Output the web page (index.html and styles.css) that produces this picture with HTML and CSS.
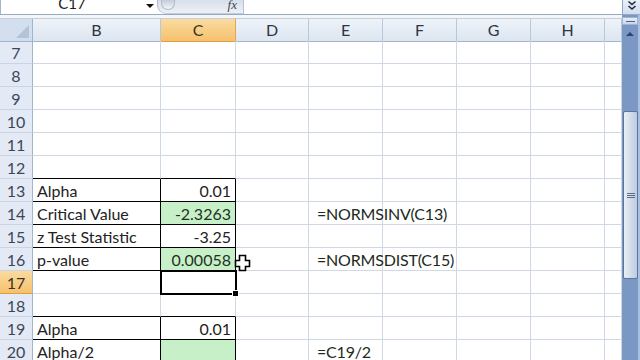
FILE: index.html
```html
<!DOCTYPE html>
<html lang="en">
<head>
    <meta charset="UTF-8">
    <title>Sheet1 - NORMSDIST</title>
    <link rel="stylesheet" href="styles.css">
</head>
<body>
    <div class="app">
        <div class="formula-bar">
            <div class="name-box">C17</div>
            <div class="name-drop"><span class="tri"></span></div>
            <div class="fx-box">
                <span class="knob"></span>
                <span class="fx">fx</span>
            </div>
            <div class="formula-input"></div>
            <div class="expand-btn">
                <svg width="12" height="12" viewBox="0 0 12 12">
                    <path d="M2.5 1.5 L6 4.5 L9.5 1.5 M2.5 6 L6 9 L9.5 6" fill="none" stroke="#1d2b40" stroke-width="1.6"/>
                </svg>
            </div>
        </div>

        <div class="main">
            <div class="sheet">
                <div class="row head">
                    <div class="corner"><span class="corner-tri"></span></div>
                    <div class="ch">B</div>
                    <div class="ch active">C</div>
                    <div class="ch">D</div>
                    <div class="ch">E</div>
                    <div class="ch">F</div>
                    <div class="ch">G</div>
                    <div class="ch">H</div>
                    <div class="ch"></div>
                </div>

                <div class="row">
                    <div class="rh">7</div>
                    <div class="cell"></div><div class="cell"></div><div class="cell"></div><div class="cell"></div>
                    <div class="cell"></div><div class="cell"></div><div class="cell"></div><div class="cell"></div>
                </div>
                <div class="row">
                    <div class="rh">8</div>
                    <div class="cell"></div><div class="cell"></div><div class="cell"></div><div class="cell"></div>
                    <div class="cell"></div><div class="cell"></div><div class="cell"></div><div class="cell"></div>
                </div>
                <div class="row">
                    <div class="rh">9</div>
                    <div class="cell"></div><div class="cell"></div><div class="cell"></div><div class="cell"></div>
                    <div class="cell"></div><div class="cell"></div><div class="cell"></div><div class="cell"></div>
                </div>
                <div class="row">
                    <div class="rh">10</div>
                    <div class="cell"></div><div class="cell"></div><div class="cell"></div><div class="cell"></div>
                    <div class="cell"></div><div class="cell"></div><div class="cell"></div><div class="cell"></div>
                </div>
                <div class="row">
                    <div class="rh">11</div>
                    <div class="cell"></div><div class="cell"></div><div class="cell"></div><div class="cell"></div>
                    <div class="cell"></div><div class="cell"></div><div class="cell"></div><div class="cell"></div>
                </div>
                <div class="row">
                    <div class="rh">12</div>
                    <div class="cell bb"></div><div class="cell bb"></div><div class="cell"></div><div class="cell"></div>
                    <div class="cell"></div><div class="cell"></div><div class="cell"></div><div class="cell"></div>
                </div>
                <div class="row">
                    <div class="rh">13</div>
                    <div class="cell bb br">Alpha</div><div class="cell bb br num">0.01</div><div class="cell"></div><div class="cell"></div>
                    <div class="cell"></div><div class="cell"></div><div class="cell"></div><div class="cell"></div>
                </div>
                <div class="row">
                    <div class="rh">14</div>
                    <div class="cell bb br">Critical Value</div><div class="cell bb br num good">-2.3263</div><div class="cell"></div><div class="cell formula">=NORMSINV(C13)</div>
                    <div class="cell"></div><div class="cell"></div><div class="cell"></div><div class="cell"></div>
                </div>
                <div class="row">
                    <div class="rh">15</div>
                    <div class="cell bb br">z Test Statistic</div><div class="cell bb br num">-3.25</div><div class="cell"></div><div class="cell"></div>
                    <div class="cell"></div><div class="cell"></div><div class="cell"></div><div class="cell"></div>
                </div>
                <div class="row">
                    <div class="rh">16</div>
                    <div class="cell bb br">p-value</div>
                    <div class="cell bb br num good cursor-host">0.00058
                        <svg class="cursor" width="17" height="18" viewBox="0 0 17 18">
                            <path d="M5.5 1.5 H11.5 V6.5 H15.5 V12.5 H11.5 V16.5 H5.5 V12.5 H1.5 V6.5 H5.5 Z" fill="#fff" stroke="#000" stroke-width="1.6" stroke-linejoin="miter"/>
                        </svg>
                    </div>
                    <div class="cell"></div><div class="cell formula">=NORMSDIST(C15)</div>
                    <div class="cell"></div><div class="cell"></div><div class="cell"></div><div class="cell"></div>
                </div>
                <div class="row">
                    <div class="rh active">17</div>
                    <div class="cell"></div><div class="cell selected"></div><div class="cell"></div><div class="cell"></div>
                    <div class="cell"></div><div class="cell"></div><div class="cell"></div><div class="cell"></div>
                </div>
                <div class="row">
                    <div class="rh">18</div>
                    <div class="cell bb"></div><div class="cell bb"></div><div class="cell"></div><div class="cell"></div>
                    <div class="cell"></div><div class="cell"></div><div class="cell"></div><div class="cell"></div>
                </div>
                <div class="row">
                    <div class="rh">19</div>
                    <div class="cell bb br">Alpha</div><div class="cell bb br num">0.01</div><div class="cell"></div><div class="cell"></div>
                    <div class="cell"></div><div class="cell"></div><div class="cell"></div><div class="cell"></div>
                </div>
                <div class="row">
                    <div class="rh">20</div>
                    <div class="cell bb br">Alpha/2</div><div class="cell bb br num good"></div><div class="cell"></div><div class="cell formula">=C19/2</div>
                    <div class="cell"></div><div class="cell"></div><div class="cell"></div><div class="cell"></div>
                </div>
            </div>

            <div class="vscroll">
                <div class="split"><span class="dash"></span></div>
                <div class="arrow-up"><span class="up-tri"></span></div>
                <div class="track">
                    <div class="thumb">
                        <span class="grip"></span>
                    </div>
                </div>
            </div>
        </div>
    </div>
</body>
</html>
```

FILE: styles.css
```css
* {
    box-sizing: border-box;
}

body {
    margin: 0;
    padding: 0;
    width: 640px;
    height: 360px;
    overflow: hidden;
    background: #fff;
    font-family: Lato, "Open Sans", sans-serif;
    font-size: 16px;
    color: #222;
}

.app {
    display: flex;
    flex-direction: column;
    width: 640px;
    height: 360px;
}

/* formula bar (cut off at the top of the picture) */
.formula-bar {
    display: flex;
    height: 15px;
    flex: none;
    border-bottom: 1px solid #98a9c1;
    background: #fff;
}

.name-box {
    width: 143px;
    height: 14px;
    line-height: 7px;
    font-size: 15px;
    text-align: center;
    border-left: 1px solid #a7b5c8;
    color: #1b1b1b;
}

.name-drop {
    width: 14px;
    display: flex;
    justify-content: center;
    padding-top: 4px;
}

.tri {
    width: 0;
    height: 0;
    border-left: 4px solid transparent;
    border-right: 4px solid transparent;
    border-top: 4px solid #111;
}

.fx-box {
    width: 86px;
    height: 14px;
    display: flex;
    align-items: flex-start;
    justify-content: space-between;
    padding: 0 6px 0 3px;
    border-radius: 0 0 0 9px;
    background: linear-gradient(#d6dfeb, #edf1f7);
    border-left: 1px solid #b0bdcf;
    border-bottom: 1px solid #c3cedc;
}

.knob {
    width: 14px;
    height: 10px;
    border-radius: 0 0 7px 7px;
    background: linear-gradient(#c3ccd8, #f4f6f9);
    border: 1px solid #b0bccc;
    border-top: none;
}

.fx {
    font-family: "Liberation Serif", serif;
    font-style: italic;
    font-size: 13px;
    line-height: 9px;
    color: #444;
}

.formula-input {
    flex: 1;
    border-left: 1px solid #b7c3d3;
}

.expand-btn {
    width: 18px;
    display: flex;
    justify-content: center;
    align-items: flex-start;
    background: linear-gradient(#e9eff8, #d3deee);
    border-left: 1px solid #8ea5c6;
}

/* grid + scrollbar */
.main {
    display: flex;
    flex: 1;
    min-height: 0;
}

.sheet {
    width: 622px;
    padding-top: 3px;
    background: #f4f6fa;
    overflow: hidden;
}

.row {
    display: grid;
    grid-template-columns: 33px 128px 75px 73px 74px 74px 74px 74px 17px;
    height: 23px;
    background: #fff;
}

.head {
    background: #e3eaf4;
    border-top: 1px solid #c2cfe0;
}

.corner {
    background: #d3dfef;
    border-right: 1px solid #9eb6ce;
    border-bottom: 1px solid #9eb6ce;
    position: relative;
}

.corner-tri {
    position: absolute;
    right: 3px;
    bottom: 3px;
    width: 0;
    height: 0;
    border-left: 13px solid transparent;
    border-bottom: 13px solid #b4c3d6;
}

.ch {
    text-align: center;
    line-height: 22px;
    color: #2e3540;
    background: linear-gradient(#eef3f9, #dde5f0);
    border-right: 1px solid #b8c8db;
    border-bottom: 1px solid #9eb6ce;
}

.ch.active {
    background: linear-gradient(#fadb9f, #f5c16d);
    border-right-color: #e2a64f;
    border-bottom-color: #e19d3d;
    color: #3a3226;
}

.rh {
    text-align: center;
    line-height: 21px;
    padding-top: 1px;
    color: #3b4759;
    background: #e3eaf5;
    border-right: 1px solid #9eb6ce;
    border-bottom: 1px solid #c9d5e5;
}

.rh.active {
    background: linear-gradient(#fadb9f, #f5c16d);
    border-bottom-color: #e19d3d;
    color: #3a3226;
}

.cell {
    line-height: 21px;
    padding: 1px 4px 0;
    white-space: nowrap;
    border-right: 1px solid #d0d7e5;
    border-bottom: 1px solid #d0d7e5;
}

.num {
    text-align: right;
}

.formula {
    padding-left: 8px;
    letter-spacing: -0.2px;
    color: #1d2a1d;
}

.good {
    background: #c8f0c8;
    color: #1f301f;
}

.bb {
    border-bottom-color: #000;
}

.br {
    border-right-color: #000;
}

.cursor-host,
.selected {
    position: relative;
}

.cursor {
    position: absolute;
    right: -16px;
    top: 6px;
}

.selected::after {
    content: '';
    position: absolute;
    left: -1px;
    top: -1px;
    right: -2px;
    bottom: -2px;
    border: 2px solid #000;
}

.selected::before {
    content: '';
    position: absolute;
    right: -4px;
    bottom: -4px;
    width: 5px;
    height: 5px;
    background: #000;
    border: 1px solid #fff;
    z-index: 1;
}

.vscroll {
    width: 18px;
    display: flex;
    flex-direction: column;
    background: #7b98c5;
    border-right: 2px solid #a9c0e1;
}

.split {
    height: 8px;
    margin-top: 2px;
    display: flex;
    justify-content: center;
    align-items: center;
    background: linear-gradient(#e8eef7, #c7d5ea);
    border: 1px solid #9fb4d3;
}

.dash {
    width: 9px;
    height: 1px;
    background: #506688;
}

.arrow-up {
    height: 17px;
    display: flex;
    justify-content: center;
    align-items: center;
}

.up-tri {
    width: 0;
    height: 0;
    border-left: 4px solid transparent;
    border-right: 4px solid transparent;
    border-bottom: 4px solid #2c4570;
}

.track {
    flex: 1;
    padding-top: 69px;
}

.thumb {
    width: 15px;
    height: 168px;
    margin-left: 1px;
    display: flex;
    justify-content: center;
    align-items: center;
    background: linear-gradient(90deg, #e9eef6, #cfd9e8 60%, #bccbe0);
    border: 1px solid #5e7597;
    border-radius: 2px;
}

.grip {
    width: 8px;
    height: 5px;
    border-top: 1px solid #5b6c86;
    border-bottom: 1px solid #5b6c86;
    position: relative;
}

.grip::after {
    content: '';
    position: absolute;
    left: 0;
    right: 0;
    top: 1px;
    height: 1px;
    background: #5b6c86;
}
```
